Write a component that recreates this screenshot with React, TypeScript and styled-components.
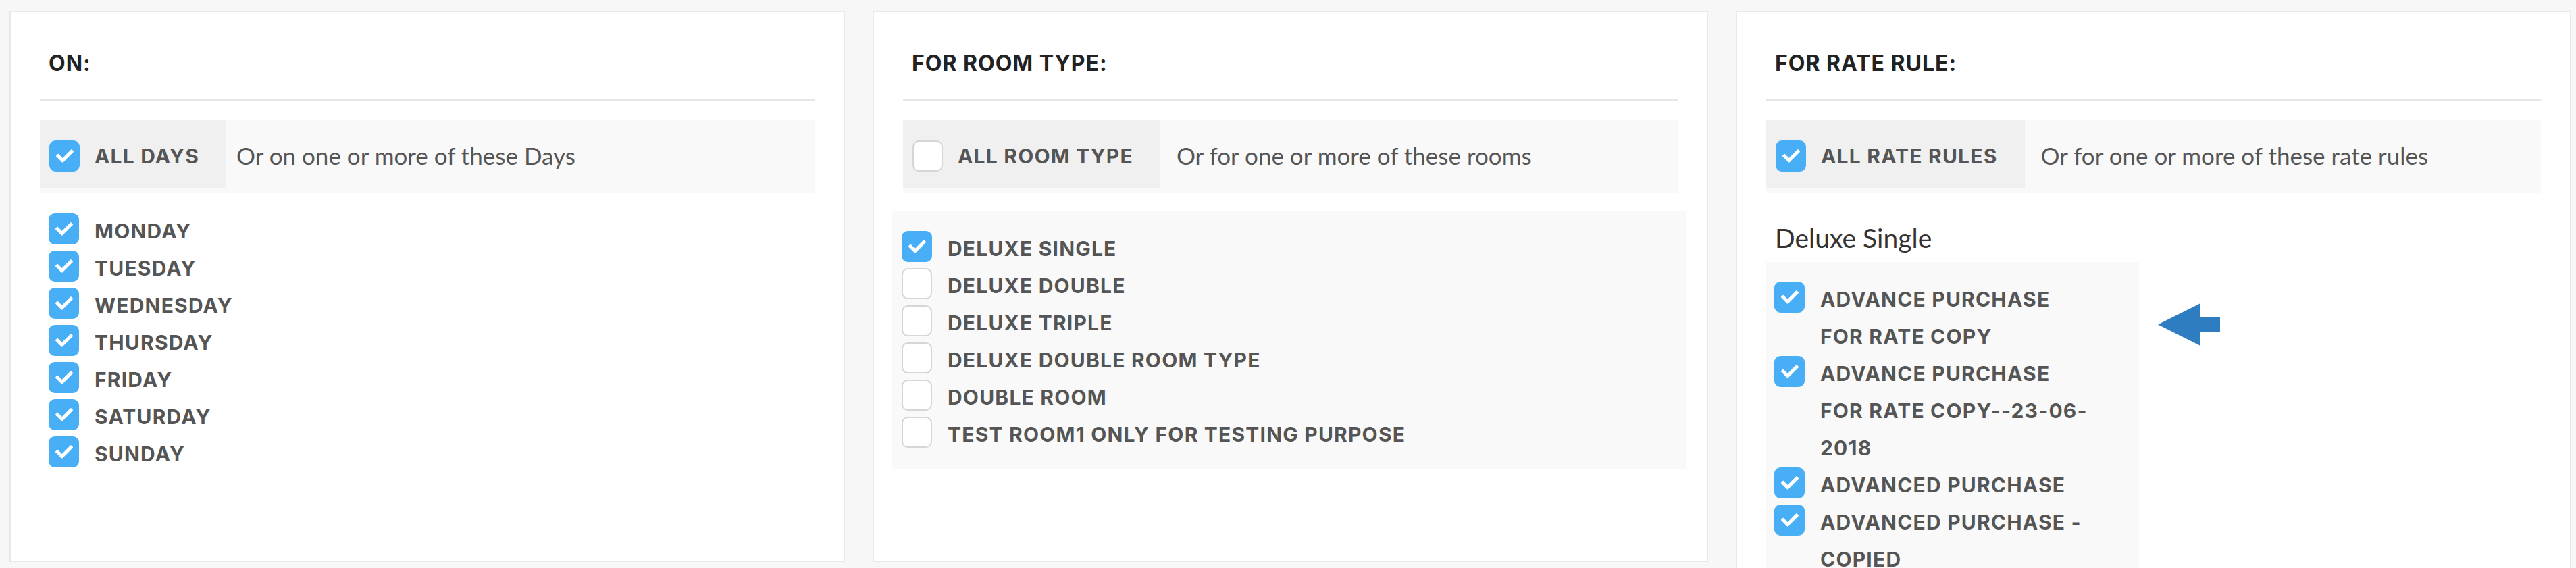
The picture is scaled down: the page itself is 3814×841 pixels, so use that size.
import React from 'react';
import styled, { createGlobalStyle } from 'styled-components';
import { FaCheck } from 'react-icons/fa';

const GlobalStyle = createGlobalStyle`
  * {
    box-sizing: border-box;
  }

  body {
    margin: 0;
    background-color: #f7f7f7;
    font-family: 'Inter', 'Liberation Sans', sans-serif;
  }
`;

// Layout
const Layout = styled.div`
  display: flex;
  align-items: flex-start;
  gap: 41px;
  padding: 16px 0 0 14px;
`;

const Panel = styled.section`
  position: relative;
  width: 1237px;
  min-height: 816px;
  flex-shrink: 0;
  background-color: #fff;
  border: 2px solid #e9e9e9;
  padding: 0 43px 40px;
`;

const Heading = styled.h3`
  margin: 0;
  padding: 56px 13px 33px;
  font-family: 'Inter', sans-serif;
  font-weight: 700;
  font-size: 32px;
  line-height: 40px;
  letter-spacing: 1px;
  color: #222;
`;

const Divider = styled.hr`
  margin: 0;
  border: 0;
  height: 3px;
  background-color: #e6e6e6;
`;

// "All" row
const AllRow = styled.div`
  display: flex;
  align-items: center;
  margin-top: 27px;
  padding-bottom: 7px;
  background-color: #f9f9f9;
`;

const AllCell = styled.label`
  display: flex;
  align-items: center;
  gap: 22px;
  height: 102px;
  padding: 5px 40px 0 14px;
  background-color: #f0f0f0;
`;

const Label = styled.span`
  font-family: 'Inter', sans-serif;
  font-weight: 700;
  font-size: 30px;
  letter-spacing: 1.2px;
  color: #555;
`;

const Desc = styled.span<{ $gap: number }>`
  margin-left: ${p => p.$gap}px;
  padding-top: 4px;
  font-family: 'Lato', sans-serif;
  font-size: 35px;
  color: #555;
`;

// Checkbox
const Box = styled.span<{ $checked: boolean }>`
  display: flex;
  align-items: center;
  justify-content: center;
  flex-shrink: 0;
  width: 45px;
  height: 46px;
  border-radius: 9px;
  color: #fff;
  background-color: ${p => (p.$checked ? '#48aef6' : '#fff')};
  border: 2px solid ${p => (p.$checked ? '#48aef6' : '#d6d6d6')};
`;

const CheckBox = ({ checked }: { checked: boolean }) => (
  <Box $checked={checked}>{checked && <FaCheck size={26} />}</Box>
);

// Lists
const List = styled.div`
  margin-top: 29px;
`;

const RoomList = styled.div`
  margin: 27px -13px 0 -16px;
  padding: 28px 14px 23px 1px;
  background-color: #f9f9f9;
`;

// narrow box, so the long rate names wrap
const RateList = styled.div`
  width: 552px;
  padding: 28px 64px 40px 12px;
  background-color: #f9f9f9;
`;

const Item = styled.label`
  display: flex;
  align-items: flex-start;
  gap: 23px;
  padding-left: 13px;
  line-height: 55px;

  ${Box} {
    margin-top: 1px;
  }
`;

const RateItem = styled(Item)`
  padding-left: 0;
`;

const SubTitle = styled.div`
  margin: 45px 0 14px;
  padding-left: 13px;
  font-family: 'Lato', sans-serif;
  font-size: 39px;
  line-height: 43px;
  color: #333;
`;

const Arrow = styled.svg`
  position: absolute;
  left: 623px;
  top: 431px;
`;

const days = ['MONDAY', 'TUESDAY', 'WEDNESDAY', 'THURSDAY', 'FRIDAY', 'SATURDAY', 'SUNDAY'];

const rooms = [
  { name: 'DELUXE SINGLE', checked: true },
  { name: 'DELUXE DOUBLE', checked: false },
  { name: 'DELUXE TRIPLE', checked: false },
  { name: 'DELUXE DOUBLE ROOM TYPE', checked: false },
  { name: 'DOUBLE ROOM', checked: false },
  { name: 'TEST ROOM1 ONLY FOR TESTING PURPOSE', checked: false },
];

const rateRules = [
  'ADVANCE PURCHASE FOR RATE COPY',
  'ADVANCE PURCHASE FOR RATE COPY--23-06-2018',
  'ADVANCED PURCHASE',
  'ADVANCED PURCHASE - COPIED',
];

const App: React.FC = () => {
  return (
    <>
      <GlobalStyle />
      <Layout>
        <Panel>
          <Heading>ON:</Heading>
          <Divider />
          <AllRow>
            <AllCell>
              <CheckBox checked />
              <Label>ALL DAYS</Label>
            </AllCell>
            <Desc $gap={15}>Or on one or more of these Days</Desc>
          </AllRow>
          <List>
            {days.map(day => (
              <Item key={day}>
                <CheckBox checked />
                <Label>{day}</Label>
              </Item>
            ))}
          </List>
        </Panel>

        <Panel>
          <Heading>FOR ROOM TYPE:</Heading>
          <Divider />
          <AllRow>
            <AllCell>
              <CheckBox checked={false} />
              <Label>ALL ROOM TYPE</Label>
            </AllCell>
            <Desc $gap={24}>Or for one or more of these rooms</Desc>
          </AllRow>
          <RoomList>
            {rooms.map(room => (
              <Item key={room.name}>
                <CheckBox checked={room.checked} />
                <Label>{room.name}</Label>
              </Item>
            ))}
          </RoomList>
        </Panel>

        <Panel>
          <Heading>FOR RATE RULE:</Heading>
          <Divider />
          <AllRow>
            <AllCell>
              <CheckBox checked />
              <Label>ALL RATE RULES</Label>
            </AllCell>
            <Desc $gap={24}>Or for one or more of these rate rules</Desc>
          </AllRow>
          <SubTitle>Deluxe Single</SubTitle>
          <RateList>
            {rateRules.map(rule => (
              <RateItem key={rule}>
                <CheckBox checked />
                <Label>{rule}</Label>
              </RateItem>
            ))}
          </RateList>
          <Arrow width="92" height="63" viewBox="0 0 92 63">
            <polygon points="0,31.5 63,0 63,21 92,21 92,42 63,42 63,63" fill="#2f7dc1" />
          </Arrow>
        </Panel>
      </Layout>
    </>
  );
};

export default App;
